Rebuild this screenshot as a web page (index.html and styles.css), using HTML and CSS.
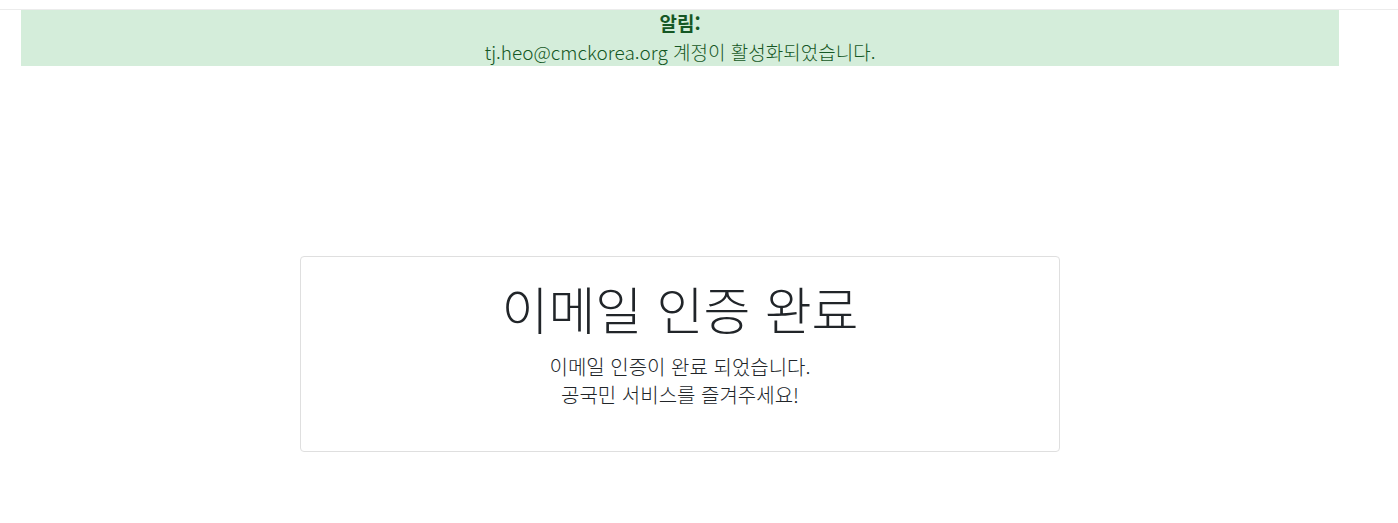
FILE: index.html
```html
<!DOCTYPE html>
<html lang="ko">
<head>
<meta charset="utf-8">
<title>이메일 인증 완료</title>
<link rel="stylesheet" href="styles.css">
</head>
<body>
<header class="topbar"></header>
<div class="container">
  <div class="alert">
    <strong class="alert-title">알림:</strong>
    <p class="alert-text">tj.heo@cmckorea.org 계정이 활성화되었습니다.</p>
  </div>
  <main class="main">
    <section class="card">
      <h1 class="card-title">이메일 인증 완료</h1>
      <p class="card-text">이메일 인증이 완료 되었습니다.<br>공국민 서비스를 즐겨주세요!</p>
    </section>
  </main>
</div>
</body>
</html>
```
FILE: styles.css
```css
html, body {
  margin: 0;
  padding: 0;
  background: #fff;
}
body {
  font-family: "Noto Sans CJK KR", "Noto Sans", sans-serif;
  color: #212529;
}
.topbar {
  height: 10px;
  border-bottom: 1px solid #ececec;
  box-sizing: border-box;
}
.container {
  margin-left: 21px;
  width: 1318px;
}
.alert {
  background: #d4edda;
  color: #155724;
  text-align: center;
  height: 56px;
  box-sizing: border-box;
}
.alert-title {
  display: block;
  font-size: 19px;
  font-weight: 700;
  line-height: 26px;
}
.alert-text {
  margin: 4px 0 0;
  font-size: 19px;
  font-weight: 300;
  line-height: 24px;
}
.main {
  display: flex;
  justify-content: center;
  padding-top: 190px;
}
.card {
  width: 760px;
  height: 196px;
  box-sizing: border-box;
  border: 1px solid #dfdfdf;
  border-radius: 4px;
  text-align: center;
  padding-top: 15px;
}
.card-title {
  margin: 0;
  font-size: 51px;
  font-weight: 300;
  line-height: 72px;
}
.card-text {
  margin: 9px 0 0;
  font-size: 20px;
  font-weight: 300;
  line-height: 28px;
}
```
